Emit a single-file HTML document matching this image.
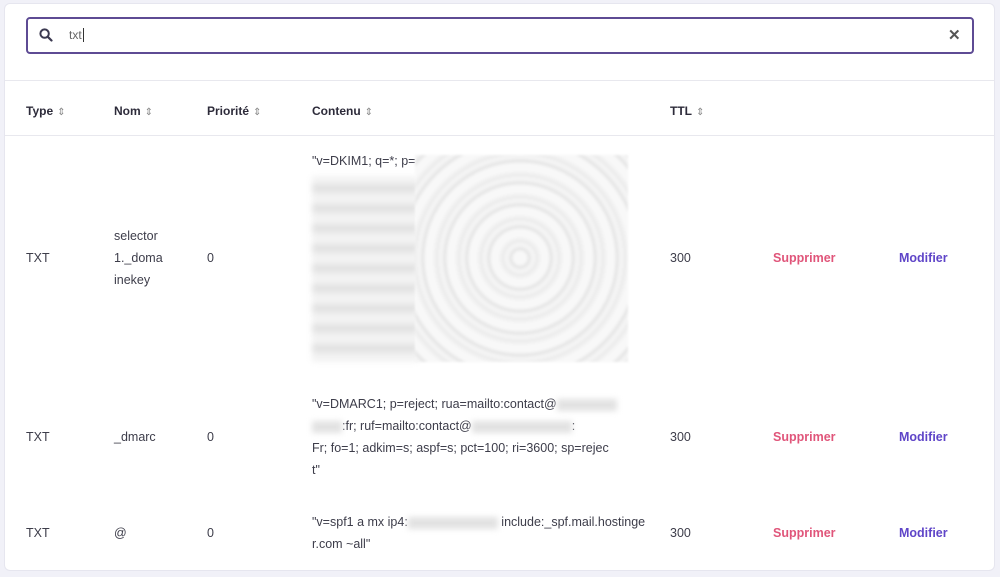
<!DOCTYPE html>
<html><head><meta charset="utf-8"><style>
*{margin:0;padding:0;box-sizing:border-box}
body{width:1000px;height:577px;background:#f1f1f8;font-family:"Liberation Sans",sans-serif;position:relative;overflow:hidden;color:#3d3d4a}
.card{position:absolute;left:4px;top:3px;width:991px;height:568px;background:#fff;border-radius:6px;border:1px solid #e6e6ef}
.a{position:absolute;font-size:12.5px;line-height:22px;white-space:nowrap}
.h{font-weight:bold;font-size:12px;color:#2d2b3a}
.h span{color:#888;font-weight:normal;font-size:10px;margin-left:4px}
.sup{color:#e0557a;font-weight:bold}
.mod{color:#5f45c8;font-weight:bold}
.line{position:absolute;left:5px;width:989px;height:1px;background:#e8e8ee}
.blur{position:absolute;left:312px;top:176px;width:106px;height:186px;background:repeating-linear-gradient(#f3f3f3 0 8px,#e2e2e2 8px 16px,#f0f0f0 16px 20px);filter:blur(3px)}
.rip{position:absolute;left:415px;top:155px;width:213px;height:207px;background:repeating-radial-gradient(circle at 105px 103px,#f8f8f8 0 6px,#e6e6e6 9px,#f6f6f6 13px,#ececec 17px,#f8f8f8 22px),#f0f0f0;filter:blur(1px)}
.bl{display:inline-block;width:90px;height:12px;background:#e2e2e2;filter:blur(3px);vertical-align:middle}
</style></head><body>
<div class="card"></div>
<div style="position:absolute;left:26px;top:17px;width:948px;height:37px;border:2px solid #5e4b94;border-radius:4px;background:#fff"></div>
<svg style="position:absolute;left:39px;top:28px" width="14" height="14" viewBox="0 0 14 14"><circle cx="5.6" cy="5.6" r="4.2" fill="none" stroke="#3b3950" stroke-width="2"/><path d="M8.8 8.8L12.5 12.5" stroke="#3b3950" stroke-width="2.2" stroke-linecap="round"/></svg>
<div class="a" style="left:69px;top:24px;font-size:12px;color:#666">txt<span style="border-left:1px solid #333;margin-left:1px"></span></div>
<div class="a" style="left:948px;top:25px;font-size:15px;font-weight:bold;color:#555">✕</div>
<div class="line" style="top:80px"></div>
<div class="a h" style="left:26px;top:100px">Type<span>⇕</span></div>
<div class="a h" style="left:114px;top:100px">Nom<span>⇕</span></div>
<div class="a h" style="left:207px;top:100px">Priorité<span>⇕</span></div>
<div class="a h" style="left:312px;top:100px">Contenu<span>⇕</span></div>
<div class="a h" style="left:670px;top:100px">TTL<span>⇕</span></div>
<div class="line" style="top:135px"></div>

<div class="a" style="left:312px;top:150px">"v=DKIM1; q=*; p=</div>
<div class="blur"></div><div class="rip"></div>
<div class="a" style="left:26px;top:247px">TXT</div>
<div class="a" style="left:114px;top:225px;line-height:22px">selector<br>1._doma<br>inekey</div>
<div class="a" style="left:207px;top:247px">0</div>
<div class="a" style="left:670px;top:247px">300</div>
<div class="a sup" style="left:773px;top:247px">Supprimer</div>
<div class="a mod" style="left:899px;top:247px">Modifier</div>

<div class="a" style="left:312px;top:393px;line-height:22px">"v=DMARC1; p=reject; rua=mailto:contact@<span class="bl" style="width:60px"></span><br><span class="bl" style="width:30px"></span>:fr; ruf=mailto:contact@<span class="bl" style="width:100px"></span>:<br>Fr; fo=1; adkim=s; aspf=s; pct=100; ri=3600; sp=rejec<br>t"</div>
<div class="a" style="left:26px;top:426px">TXT</div>
<div class="a" style="left:114px;top:426px">_dmarc</div>
<div class="a" style="left:207px;top:426px">0</div>
<div class="a" style="left:670px;top:426px">300</div>
<div class="a sup" style="left:773px;top:426px">Supprimer</div>
<div class="a mod" style="left:899px;top:426px">Modifier</div>

<div class="a" style="left:312px;top:511px;line-height:22px">"v=spf1 a mx ip4:<span class="bl"></span> include:_spf.mail.hostinge<br>r.com ~all"</div>
<div class="a" style="left:26px;top:522px">TXT</div>
<div class="a" style="left:114px;top:522px">@</div>
<div class="a" style="left:207px;top:522px">0</div>
<div class="a" style="left:670px;top:522px">300</div>
<div class="a sup" style="left:773px;top:522px">Supprimer</div>
<div class="a mod" style="left:899px;top:522px">Modifier</div>
</body></html>
